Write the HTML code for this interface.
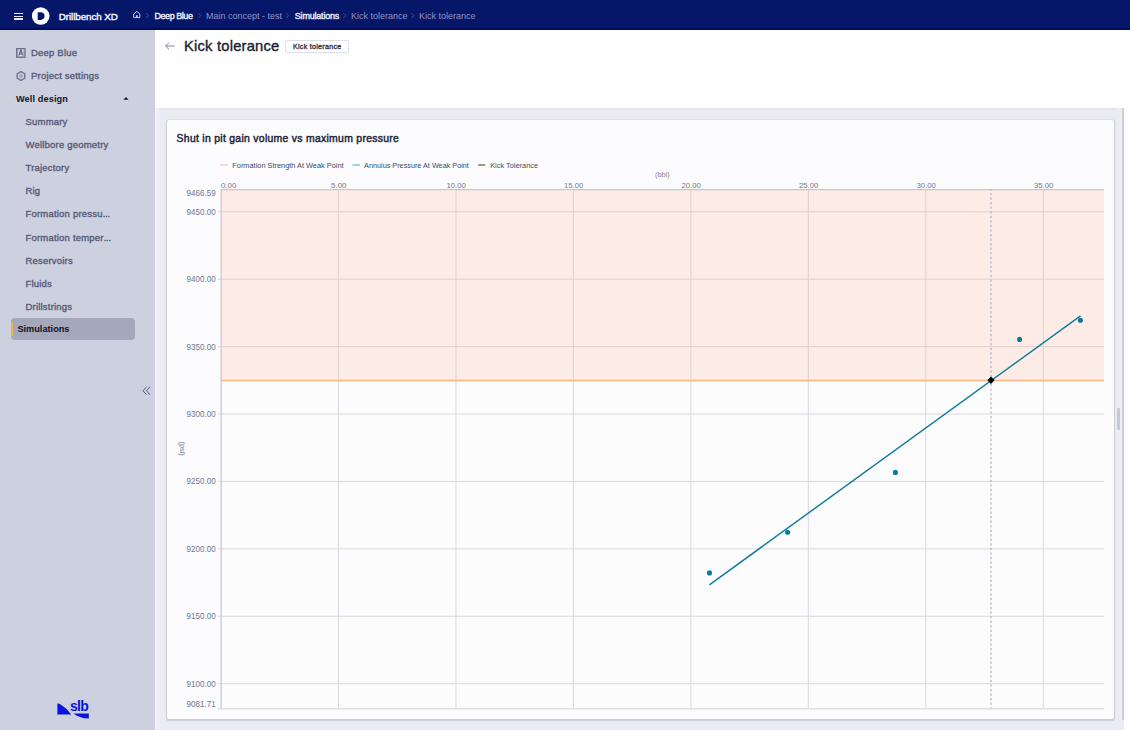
<!DOCTYPE html>
<html><head><meta charset="utf-8">
<style>
*{margin:0;padding:0;box-sizing:border-box}
html,body{width:1130px;height:730px;overflow:hidden;font-family:"Liberation Sans",sans-serif;background:#fefeff;position:relative}
.abs{position:absolute}
.nav{position:absolute;left:0;top:0;width:1130px;height:30px;background:#061668}
.navline{position:absolute;left:0;top:28px;width:1130px;height:2px;background:#020c5c}
.side{position:absolute;left:0;top:30px;width:155px;height:700px;background:#cdd0de}
.hdr{position:absolute;left:155px;top:30px;width:975px;height:78px;background:#fefeff}
.content{position:absolute;left:155px;top:108px;width:969px;height:622px;background:#eaebf3}
.card{position:absolute;left:166px;top:119px;width:949px;height:601px;background:#fcfcfe;border:1px solid #cdcdd4;border-top-color:#dedee6;border-radius:3px;box-shadow:0 1px 1px rgba(0,0,0,0.12)}
.t{position:absolute;white-space:nowrap;line-height:1}
.si{position:absolute;font-size:9.5px;font-weight:normal;letter-spacing:0.2px;-webkit-text-stroke:0.35px currentColor;color:#575a78;white-space:nowrap;line-height:1}
.bc{position:absolute;font-size:9px;margin-top:0.6px;white-space:nowrap;line-height:1;color:#9095c8}
.bcw{color:#f0f1ff;letter-spacing:-0.2px;font-size:9px;margin-top:0.7px;-webkit-text-stroke:0.35px #f0f1ff}
</style></head><body>
<div class="nav"></div>
<div class="navline"></div>
<!-- hamburger -->
<div class="abs" style="left:13.7px;top:12.6px;width:9.5px;height:1.2px;background:#e8e8ff"></div>
<div class="abs" style="left:13.7px;top:15.5px;width:9.5px;height:1.2px;background:#e8e8ff"></div>
<div class="abs" style="left:13.7px;top:18.4px;width:9.5px;height:1.2px;background:#e8e8ff"></div>
<!-- logo -->
<svg class="abs" style="left:31px;top:6px" width="20" height="20" viewBox="0 0 20 20"><circle cx="9.7" cy="10" r="8.8" fill="#fff"/><path d="M6.7 6.3 H9.6 C12 6.3 13.6 7.9 13.6 10 C13.6 12.1 12 13.9 9.6 13.9 H6.7 Z" fill="#061668"/></svg>
<div class="t" style="left:58.8px;top:11.6px;font-size:9.9px;color:#f4f5ff;letter-spacing:-0.1px;-webkit-text-stroke:0.4px #f4f5ff">Drillbench XD</div>
<!-- home -->
<svg class="abs" style="left:132px;top:10px" width="10" height="10" viewBox="0 0 10 10"><path d="M1.7 4 L4.8 1.3 L7.9 4 V7.6 H1.7 Z" fill="none" stroke="#c3c6ee" stroke-width="1" stroke-linejoin="round"/><path d="M3.9 7.6 V6 A0.9 0.9 0 0 1 5.7 6 V7.6 Z" fill="#c3c6ee"/></svg>
<svg class="abs" style="left:0;top:0" width="500" height="30"><g fill="none" stroke="#4e559a" stroke-width="0.9"><path d="M146.3 13.3 L148.6 15.6 L146.3 17.9"/><path d="M198.5 13.3 L200.8 15.6 L198.5 17.9"/><path d="M286.3 13.3 L288.6 15.6 L286.3 17.9"/><path d="M343.5 13.3 L345.8 15.6 L343.5 17.9"/><path d="M411.5 13.3 L413.8 15.6 L411.5 17.9"/></g></svg>
<div class="bc bcw" style="left:154.5px;top:11px;letter-spacing:-0.45px">Deep Blue</div>
<div class="bc" style="left:206px;top:11px">Main concept - test</div>
<div class="bc bcw" style="left:294.8px;top:11px;letter-spacing:-0.2px">Simulations</div>
<div class="bc" style="left:351px;top:11px">Kick tolerance</div>
<div class="bc" style="left:419px;top:11px">Kick tolerance</div>

<div class="side">
  <svg class="abs" style="left:15.8px;top:17.9px" width="10" height="10" viewBox="0 0 10 10"><rect x="0" y="0" width="9.6" height="9.9" fill="#6c6f8a"/><rect x="1.1" y="1.1" width="7.4" height="7.7" fill="#a3a6bd"/><path d="M2.6 1.6 H4 L2.8 6.5 H2.2 Z M5.8 1.6 H7.2 L7.4 6.5 H6.8 Z" fill="#dfe1f0"/><path d="M3.2 7 L4.9 2 L6.6 7" fill="none" stroke="#5f627c" stroke-width="1.1"/><rect x="3.4" y="7.2" width="3" height="0.9" fill="#eef0fa"/></svg>
  <div class="si" style="left:31px;top:17.7px">Deep Blue</div>
  <svg class="abs" style="left:15.5px;top:41.1px" width="10" height="10" viewBox="0 0 10 10"><path d="M5.00 0.50 L6.85 1.80 L8.90 2.75 L8.70 5.00 L8.90 7.25 L6.85 8.20 L5.00 9.50 L3.15 8.20 L1.10 7.25 L1.30 5.00 L1.10 2.75 L3.15 1.80 Z" fill="none" stroke="#6a6d88" stroke-width="1.35" stroke-linejoin="round"/><circle cx="5" cy="5" r="1.2" fill="none" stroke="#7d8099" stroke-width="0.9"/></svg>
  <div class="si" style="left:31px;top:40.7px">Project settings</div>
  <div class="si" style="left:16px;top:65.0px;color:#15161f;letter-spacing:0.1px;font-weight:bold;font-size:9.2px;-webkit-text-stroke:0">Well design</div>
  <svg class="abs" style="left:122px;top:66px" width="8" height="5" viewBox="0 0 8 5"><path d="M1.4 3.7 L4 1.1 L6.6 3.7 Z" fill="#1a1b26"/></svg>
  <div class="si" style="left:25.5px;top:86.90px">Summary</div>
  <div class="si" style="left:25.5px;top:110.02px">Wellbore geometry</div>
  <div class="si" style="left:25.5px;top:133.14px">Trajectory</div>
  <div class="si" style="left:25.5px;top:156.26px">Rig</div>
  <div class="si" style="left:25.5px;top:179.38px">Formation pressu<span style="letter-spacing:-0.2px">...</span></div>
  <div class="si" style="left:25.5px;top:202.50px">Formation temper<span style="letter-spacing:-0.2px">...</span></div>
  <div class="si" style="left:25.5px;top:225.62px">Reservoirs</div>
  <div class="si" style="left:25.5px;top:248.74px">Fluids</div>
  <div class="si" style="left:25.5px;top:271.86px">Drillstrings</div>
  <div class="abs" style="left:11px;top:288px;width:123.5px;height:22px;background:#a5a8ba;border-radius:4px"></div>
  <div class="abs" style="left:11.2px;top:292px;width:1.4px;height:14px;background:#f0b63a"></div>
  <div class="si" style="left:17.4px;top:295.2px;color:#10111a;font-weight:bold;font-size:9.2px;letter-spacing:0;-webkit-text-stroke:0">Simulations</div>
  <svg class="abs" style="left:141px;top:355px" width="12" height="12" viewBox="0 0 12 12"><path d="M5.6 1.7 L2 5.8 L5.6 9.9 M9.1 1.7 L5.5 5.8 L9.1 9.9" fill="none" stroke="#5c5f78" stroke-width="1"/></svg>
  
</div>

<div class="hdr">
  <svg class="abs" style="left:9px;top:11px" width="12" height="10" viewBox="0 0 12 10"><path d="M10.5 5 H1.8 M5 1.6 L1.5 5 L5 8.4" fill="none" stroke="#80839a" stroke-width="1"/></svg>
  <div class="t" style="left:28.9px;top:9.8px;font-size:13.9px;color:#1b1d30;letter-spacing:0.2px;-webkit-text-stroke:0.35px #1b1d30;transform:scaleX(1.06);transform-origin:0 0">Kick tolerance</div>
  <div class="abs" style="left:130.4px;top:9.6px;width:63.5px;height:13px;border:1px solid #dfdfe7;border-radius:2px;background:#fff"></div>
  <div class="t" style="left:137.7px;top:13.6px;font-size:6.6px;color:#2e3045;letter-spacing:0.25px;transform:scaleX(1.08);transform-origin:0 0;-webkit-text-stroke:0.3px #2e3045">Kick tolerance</div>
</div>
<div class="content"></div>
<div class="abs" style="left:155px;top:108px;width:969px;height:2px;background:#e4e5eb"></div>
<div class="abs" style="left:155px;top:108px;width:3px;height:622px;background:#f0f0f8"></div><div class="abs" style="left:158px;top:108px;width:2px;height:622px;background:#ececf4"></div>
<div class="card"></div>
<div class="abs" style="left:1116px;top:108px;width:6px;height:612px;background:#ececf3"></div><div class="abs" style="left:1122px;top:108px;width:1.8px;height:612px;background:#cfcfd6"></div>
<div class="abs" style="left:1116.7px;top:408px;width:3.8px;height:22.4px;background:#c6c8d8;border-radius:1px"></div>
<div class="t" style="left:176.6px;top:134.4px;font-size:10.4px;color:#23253a;letter-spacing:0.3px;-webkit-text-stroke:0.45px #23253a">Shut in pit gain volume vs maximum pressure</div>
<svg class="abs" style="left:0;top:0" width="1130" height="730"><path d="M57.4 703.3 C 62 704.5, 67 709, 71.2 714.6 L57.4 714.6 Z" fill="#0a14e0"/><path d="M73.5 713.5 H88.8 V718.6 C 82 718.4, 77 716.5, 73.5 713.5 Z" fill="#0a14e0"/><text x="70" y="710.8" font-family="Liberation Sans" font-size="14" font-weight="bold" fill="#0a14e0" letter-spacing="-0.7">slb</text></svg>
<svg width="1130" height="730" viewBox="0 0 1130 730" style="position:absolute;left:0;top:0">
<rect x="221" y="189.43" width="883" height="518.9300000000001" fill="#fcfcfd"/>
<rect x="221" y="189.43" width="883" height="191.07" fill="#fcece5"/>
<line x1="338.47" y1="189.43" x2="338.47" y2="380.5" stroke="#e0d0cd" stroke-width="1"/>
<line x1="338.47" y1="380.5" x2="338.47" y2="708.36" stroke="#d8d8e0" stroke-width="1"/>
<line x1="455.94" y1="189.43" x2="455.94" y2="380.5" stroke="#e0d0cd" stroke-width="1"/>
<line x1="455.94" y1="380.5" x2="455.94" y2="708.36" stroke="#d8d8e0" stroke-width="1"/>
<line x1="573.41" y1="189.43" x2="573.41" y2="380.5" stroke="#e0d0cd" stroke-width="1"/>
<line x1="573.41" y1="380.5" x2="573.41" y2="708.36" stroke="#d8d8e0" stroke-width="1"/>
<line x1="690.88" y1="189.43" x2="690.88" y2="380.5" stroke="#e0d0cd" stroke-width="1"/>
<line x1="690.88" y1="380.5" x2="690.88" y2="708.36" stroke="#d8d8e0" stroke-width="1"/>
<line x1="808.35" y1="189.43" x2="808.35" y2="380.5" stroke="#e0d0cd" stroke-width="1"/>
<line x1="808.35" y1="380.5" x2="808.35" y2="708.36" stroke="#d8d8e0" stroke-width="1"/>
<line x1="925.82" y1="189.43" x2="925.82" y2="380.5" stroke="#e0d0cd" stroke-width="1"/>
<line x1="925.82" y1="380.5" x2="925.82" y2="708.36" stroke="#d8d8e0" stroke-width="1"/>
<line x1="1043.29" y1="189.43" x2="1043.29" y2="380.5" stroke="#e0d0cd" stroke-width="1"/>
<line x1="1043.29" y1="380.5" x2="1043.29" y2="708.36" stroke="#d8d8e0" stroke-width="1"/>
<line x1="221" y1="683.7" x2="1104" y2="683.7" stroke="#d8d8e0" stroke-width="1"/>
<line x1="217.8" y1="683.7" x2="221" y2="683.7" stroke="#d6d6e0" stroke-width="1"/>
<line x1="221" y1="616.29" x2="1104" y2="616.29" stroke="#d8d8e0" stroke-width="1"/>
<line x1="217.8" y1="616.29" x2="221" y2="616.29" stroke="#d6d6e0" stroke-width="1"/>
<line x1="221" y1="548.87" x2="1104" y2="548.87" stroke="#d8d8e0" stroke-width="1"/>
<line x1="217.8" y1="548.87" x2="221" y2="548.87" stroke="#d6d6e0" stroke-width="1"/>
<line x1="221" y1="481.46" x2="1104" y2="481.46" stroke="#d8d8e0" stroke-width="1"/>
<line x1="217.8" y1="481.46" x2="221" y2="481.46" stroke="#d6d6e0" stroke-width="1"/>
<line x1="221" y1="414.04" x2="1104" y2="414.04" stroke="#d8d8e0" stroke-width="1"/>
<line x1="217.8" y1="414.04" x2="221" y2="414.04" stroke="#d6d6e0" stroke-width="1"/>
<line x1="221" y1="346.63" x2="1104" y2="346.63" stroke="#e0d0cd" stroke-width="1"/>
<line x1="217.8" y1="346.63" x2="221" y2="346.63" stroke="#d6d6e0" stroke-width="1"/>
<line x1="221" y1="279.21" x2="1104" y2="279.21" stroke="#e0d0cd" stroke-width="1"/>
<line x1="217.8" y1="279.21" x2="221" y2="279.21" stroke="#d6d6e0" stroke-width="1"/>
<line x1="221" y1="211.8" x2="1104" y2="211.8" stroke="#e0d0cd" stroke-width="1"/>
<line x1="217.8" y1="211.8" x2="221" y2="211.8" stroke="#d6d6e0" stroke-width="1"/>
<line x1="221.1" y1="189.43" x2="221.1" y2="708.86" stroke="#c8c9d8" stroke-width="1.3"/>
<line x1="217.8" y1="708.86" x2="1104" y2="708.86" stroke="#d0d0dc" stroke-width="1"/>
<line x1="221" y1="189.63" x2="1104" y2="189.63" stroke="#cfc3cd" stroke-width="1.2"/>
<line x1="221" y1="380.5" x2="1104" y2="380.5" stroke="#fbb487" stroke-width="1.5"/>
<line x1="991" y1="189.43" x2="991" y2="708.36" stroke="#aeaec0" stroke-width="1.2" stroke-dasharray="2.2 2.35" stroke-dashoffset="1"/>
<line x1="709.4" y1="584.8" x2="1080.5" y2="315.9" stroke="#0e7c9b" stroke-width="1.45"/>
<circle cx="709.5" cy="572.9" r="2.55" fill="#0c7a99"/>
<circle cx="787.6" cy="532.2" r="2.55" fill="#0c7a99"/>
<circle cx="895.4" cy="472.4" r="2.55" fill="#0c7a99"/>
<circle cx="1019.6" cy="339.4" r="2.55" fill="#0c7a99"/>
<circle cx="1080.4" cy="320.2" r="2.55" fill="#0c7a99"/>
<path d="M991 376.6 L994.6 380.3 L991 384 L987.4 380.3 Z" fill="#000"/>
<text x="215.6" y="686.6" text-anchor="end" textLength="29" font-family="Liberation Sans" font-size="8.4" fill="#72758c" lengthAdjust="spacingAndGlyphs">9100.00</text>
<text x="215.6" y="619.2" text-anchor="end" textLength="29" font-family="Liberation Sans" font-size="8.4" fill="#72758c" lengthAdjust="spacingAndGlyphs">9150.00</text>
<text x="215.6" y="551.8" text-anchor="end" textLength="29" font-family="Liberation Sans" font-size="8.4" fill="#72758c" lengthAdjust="spacingAndGlyphs">9200.00</text>
<text x="215.6" y="484.4" text-anchor="end" textLength="29" font-family="Liberation Sans" font-size="8.4" fill="#72758c" lengthAdjust="spacingAndGlyphs">9250.00</text>
<text x="215.6" y="416.9" text-anchor="end" textLength="29" font-family="Liberation Sans" font-size="8.4" fill="#72758c" lengthAdjust="spacingAndGlyphs">9300.00</text>
<text x="215.6" y="349.5" text-anchor="end" textLength="29" font-family="Liberation Sans" font-size="8.4" fill="#72758c" lengthAdjust="spacingAndGlyphs">9350.00</text>
<text x="215.6" y="282.1" text-anchor="end" textLength="29" font-family="Liberation Sans" font-size="8.4" fill="#72758c" lengthAdjust="spacingAndGlyphs">9400.00</text>
<text x="215.6" y="214.7" text-anchor="end" textLength="29" font-family="Liberation Sans" font-size="8.4" fill="#72758c" lengthAdjust="spacingAndGlyphs">9450.00</text>
<text x="215.6" y="196.1" text-anchor="end" textLength="29" font-family="Liberation Sans" font-size="8.4" fill="#72758c" lengthAdjust="spacingAndGlyphs">9466.59</text>
<text x="215.6" y="707.2" text-anchor="end" textLength="29" font-family="Liberation Sans" font-size="8.4" fill="#72758c" lengthAdjust="spacingAndGlyphs">9081.71</text>
<text x="221" y="187.7" textLength="15.4" font-size="7.8" font-family="Liberation Sans" font-size="8.4" fill="#72758c" lengthAdjust="spacingAndGlyphs">0.00</text>
<text x="338.8" y="187.7" text-anchor="middle" textLength="15.4" font-size="7.8" font-family="Liberation Sans" font-size="8.4" fill="#72758c" lengthAdjust="spacingAndGlyphs">5.00</text>
<text x="456.2" y="187.7" text-anchor="middle" textLength="19.3" font-size="7.8" font-family="Liberation Sans" font-size="8.4" fill="#72758c" lengthAdjust="spacingAndGlyphs">10.00</text>
<text x="573.7" y="187.7" text-anchor="middle" textLength="19.3" font-size="7.8" font-family="Liberation Sans" font-size="8.4" fill="#72758c" lengthAdjust="spacingAndGlyphs">15.00</text>
<text x="691.2" y="187.7" text-anchor="middle" textLength="19.3" font-size="7.8" font-family="Liberation Sans" font-size="8.4" fill="#72758c" lengthAdjust="spacingAndGlyphs">20.00</text>
<text x="808.6" y="187.7" text-anchor="middle" textLength="19.3" font-size="7.8" font-family="Liberation Sans" font-size="8.4" fill="#72758c" lengthAdjust="spacingAndGlyphs">25.00</text>
<text x="926.1" y="187.7" text-anchor="middle" textLength="19.3" font-size="7.8" font-family="Liberation Sans" font-size="8.4" fill="#72758c" lengthAdjust="spacingAndGlyphs">30.00</text>
<text x="1043.6" y="187.7" text-anchor="middle" textLength="19.3" font-size="7.8" font-family="Liberation Sans" font-size="8.4" fill="#72758c" lengthAdjust="spacingAndGlyphs">35.00</text>
<text x="662.4" y="177" text-anchor="middle" font-family="Liberation Sans" font-size="7.3" fill="#787b92">(bbl)</text>
<text transform="translate(179.6,448.6) rotate(90)" text-anchor="middle" font-family="Liberation Sans" font-size="7.3" fill="#787b92">(psi)</text>
<line x1="220" y1="165" x2="228" y2="165" stroke="#f9c9ad" stroke-width="1.2"/>
<line x1="352.4" y1="165" x2="359.8" y2="165" stroke="#5fb5c5" stroke-width="1.2"/>
<line x1="478.2" y1="165" x2="485.2" y2="165" stroke="#555" stroke-width="1.2"/>
<text x="232.3" y="167.6" font-family="Liberation Sans" font-size="7.6" fill="#45485a" lengthAdjust="spacingAndGlyphs" textLength="111.3">Formation Strength At Weak Point</text>
<text x="364.1" y="167.6" font-family="Liberation Sans" font-size="7.6" fill="#45485a" lengthAdjust="spacingAndGlyphs" textLength="104.8">Annulus Pressure At Weak Point</text>
<text x="490.2" y="167.6" font-family="Liberation Sans" font-size="7.6" fill="#45485a" lengthAdjust="spacingAndGlyphs" textLength="47.9">Kick Tolerance</text>
</svg>
</body></html>
